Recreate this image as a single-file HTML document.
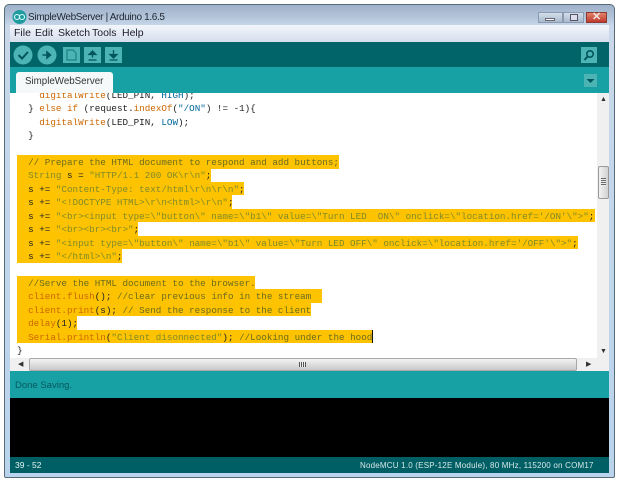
<!DOCTYPE html>
<html><head><meta charset="utf-8"><style>
html,body{margin:0;padding:0;width:620px;height:483px;overflow:hidden;background:#fff}
div{position:absolute;box-sizing:border-box}
#f{left:4px;top:4px;width:611px;height:474px;border:1px solid #5a6b78;border-radius:5px 5px 2px 2px;background:linear-gradient(#9fb2c9 0,#b3c4da 12px,#c9d8ea 21px,#b9d4ec 100%)}
.s{font:9.25px/13.43px "Liberation Mono",monospace;white-space:pre;left:7px;color:#222;height:13.43px;filter:blur(.25px)}
.h{background:#fdc300;left:17px;height:13.5px}
.o{color:#cc6600}.b{color:#006699}.k{color:#7f8a2a}
.c{color:#6b6b20}
.m{top:26px;font:10.5px/15px 'Liberation Sans',sans-serif;color:#1c1c2c;white-space:pre}
</style></head><body>
<div id="f"></div>
<svg style="position:absolute;left:12px;top:10px" width="15" height="14"><circle cx="7.500" cy="7" r="7" fill="#1f9ba0"/><circle cx="5" cy="7" r="2.500" fill="none" stroke="#dff" stroke-width="1.100"/><circle cx="10" cy="7" r="2.500" fill="none" stroke="#dff" stroke-width="1.100"/></svg>
<div style="left:28px;top:10px;font:10px/15px 'Liberation Sans',sans-serif;color:#1e2630;white-space:pre;letter-spacing:-.35px">SimpleWebServer | Arduino 1.6.5</div>
<div style="left:538px;top:12px;width:25px;height:11px;background:linear-gradient(#d5deea,#a9bacd);border:1px solid #8a9ab0"></div>
<div style="left:545px;top:18px;width:10px;height:3px;background:#fff;border:1px solid #667"></div>
<div style="left:563px;top:12px;width:21px;height:11px;background:linear-gradient(#d5deea,#a9bacd);border:1px solid #8a9ab0"></div>
<div style="left:570px;top:14px;width:8px;height:7px;border:1.500px solid #556;background:#dde"></div>
<div style="left:586px;top:12px;width:21px;height:11px;background:linear-gradient(#e2826c,#c0392b);border:1px solid #8a3a30"></div>
<div style="left:592px;top:11px;font:bold 11px/12px 'Liberation Sans',sans-serif;color:#f4e4e0">✕</div>
<div style="left:10px;top:25px;width:599px;height:17px;background:linear-gradient(#f3f6fb,#d6deec)"></div>
<div class="m" style="left:14px">File</div>
<div class="m" style="left:35px">Edit</div>
<div class="m" style="left:58px">Sketch</div>
<div class="m" style="left:92px">Tools</div>
<div class="m" style="left:122px">Help</div>
<div style="left:10px;top:42px;width:599px;height:25px;background:#006468"></div>
<div style="left:10px;top:67px;width:599px;height:26px;background:#17a1a5"></div>
<svg style="position:absolute;left:13px;top:45px" width="115" height="20">
<circle cx="10" cy="10" r="9.5" fill="#4db4b5"/><circle cx="34" cy="10" r="9.5" fill="#4db4b5"/>
<path d="M5.500 10l3.500 3.500 6-6.500" fill="none" stroke="#00565a" stroke-width="2"/>
<path d="M29.500 10h5M34 7l3.500 3-3.500 3z" fill="#00565a" stroke="#00565a" stroke-width="1.500"/>
<rect x="50" y="2" width="17" height="16" fill="#4db4b5"/><rect x="71" y="2" width="17" height="16" fill="#4db4b5"/><rect x="92" y="2" width="17" height="16" fill="#4db4b5"/>
<path d="M54 5h6l3 3v7h-9z" fill="none" stroke="#1d8084" stroke-width="1.200"/>
<path d="M79.500 6l-3.500 3.500h7zM79.500 9v3.500M75.500 15h8" fill="#00565a" stroke="#00565a" stroke-width="1.300"/>
<path d="M100.500 13l-3.500-3.500h7zM100.500 5v5M96.500 15h8" fill="#00565a" stroke="#00565a" stroke-width="1.300"/></svg>
<svg style="position:absolute;left:581px;top:47px" width="16" height="16"><rect width="16" height="16" fill="#4db4b5"/><circle cx="9" cy="7" r="3.200" fill="none" stroke="#00565a" stroke-width="1.600"/><path d="M6.500 9.500L3.500 13" stroke="#00565a" stroke-width="2"/></svg>
<svg style="position:absolute;left:584px;top:74px" width="13" height="13"><rect width="13" height="13" fill="#4db4b5"/><path d="M2.500 5h8l-4 4z" fill="#00565a"/></svg>
<div style="left:16px;top:72px;width:97px;height:21px;background:#f6f9f9;border-radius:3px 3px 0 0"></div>
<div style="left:25px;top:75px;font:9.75px/14px 'Liberation Sans',sans-serif;color:#333;white-space:pre">SimpleWebServer</div>

<div id="e" style="left:10px;top:93px;width:587px;height:265px;background:#fff"></div>
<div style="left:597px;top:93px;width:12px;height:265px;background:#f0f0f0"></div>
<div style="left:598px;top:166px;width:11px;height:33px;background:linear-gradient(90deg,#f2f2f2,#d2d2d2);border:1px solid #9a9a9a;border-radius:2px"></div>
<div style="left:601px;top:178px;width:5px;height:8px;background:repeating-linear-gradient(#666 0 1px,#eee 1px 2px)"></div>
<div style="left:600px;top:96px;font:7px/8px 'Liberation Sans',sans-serif;color:#333">▲</div>
<div style="left:600px;top:348px;font:7px/8px 'Liberation Sans',sans-serif;color:#333">▼</div>
<div style="left:10px;top:358px;width:599px;height:13px;background:#f0f0f0"></div>
<div style="left:29px;top:358px;width:548px;height:13px;background:linear-gradient(#f4f4f4,#c9c9c9);border:1px solid #a8a8a8;border-radius:2px"></div>
<div style="left:299px;top:362px;width:7px;height:5px;background:repeating-linear-gradient(90deg,#555 0 1px,#eee 1px 2px)"></div>
<div style="left:18px;top:360px;font:7px/9px 'Liberation Sans',sans-serif;color:#333">◀</div>
<div style="left:586px;top:360px;font:7px/9px 'Liberation Sans',sans-serif;color:#333">▶</div>

<div class="h" style="top:155px;width:322px"></div>
<div class="h" style="top:168.400px;width:194px"></div>
<div class="h" style="top:181.900px;width:227px"></div>
<div class="h" style="top:195.300px;width:215px"></div>
<div class="h" style="top:208.700px;width:578px"></div>
<div class="h" style="top:222.200px;width:121px"></div>
<div class="h" style="top:235.600px;width:561px"></div>
<div class="h" style="top:249px;width:105px"></div>
<div class="h" style="top:275.900px;width:238px"></div>
<div class="h" style="top:289.300px;width:305px"></div>
<div class="h" style="top:302.800px;width:294px"></div>
<div class="h" style="top:316.200px;width:60px"></div>
<div class="h" style="top:329.600px;width:356px"></div>
<div style="left:372px;top:330px;width:1px;height:13px;background:#111"></div>

<div style="left:10px;top:93px;width:587px;height:265px;overflow:hidden">
<div style="left:0;top:1px;width:587px;height:264px">
<div class="s" style="top:-5px">    <span class="o">digitalWrite</span>(LED_PIN, <span class="b">HIGH</span>);</div>
<div class="s" style="top:8.400px">  } <span class="o">else</span> <span class="o">if</span> (request.<span class="o">indexOf</span>(<span class="b">"/ON"</span>) != -1){</div>
<div class="s" style="top:21.900px">    <span class="o">digitalWrite</span>(LED_PIN, <span class="b">LOW</span>);</div>
<div class="s" style="top:35.300px">  }</div>
<div class="s" style="top:62px">  <span class="c">// Prepare the HTML document to respond and add buttons;</span></div>
<div class="s" style="top:75.400px">  <span class="k">String</span> s = <span class="k">"HTTP/1.1 200 OK\r\n"</span>;</div>
<div class="s" style="top:88.900px">  s += <span class="k">"Content-Type: text/html\r\n\r\n"</span>;</div>
<div class="s" style="top:102.300px">  s += <span class="k">"&lt;!DOCTYPE HTML&gt;\r\n&lt;html&gt;\r\n"</span>;</div>
<div class="s" style="top:115.700px">  s += <span class="k">"&lt;br&gt;&lt;input type=\"button\" name=\"b1\" value=\"Turn LED  ON\" onclick=\"location.href='/ON'\"&gt;"</span>;</div>
<div class="s" style="top:129.200px">  s += <span class="k">"&lt;br&gt;&lt;br&gt;&lt;br&gt;"</span>;</div>
<div class="s" style="top:142.600px">  s += <span class="k">"&lt;input type=\"button\" name=\"b1\" value=\"Turn LED OFF\" onclick=\"location.href='/OFF'\"&gt;"</span>;</div>
<div class="s" style="top:156px">  s += <span class="k">"&lt;/html&gt;\n"</span>;</div>
<div class="s" style="top:182.900px">  <span class="c">//Serve the HTML document to the browser.</span></div>
<div class="s" style="top:196.300px">  <span class="o">client.flush</span>(); <span class="c">//clear previous info in the stream</span></div>
<div class="s" style="top:209.800px">  <span class="o">client.print</span>(s); <span class="c">// Send the response to the client</span></div>
<div class="s" style="top:223.200px">  <span class="o">delay</span>(1);</div>
<div class="s" style="top:236.600px">  <span class="o">Serial.println</span>(<span class="k">"Client disonnected"</span>); <span class="c">//Looking under the hood</span></div>
<div class="s" style="top:250px">}</div>
</div>
</div>

<div style="left:10px;top:371px;width:599px;height:27px;background:#17a1a5"></div>
<div style="left:15px;top:379px;font:9.5px/14px 'Liberation Sans',sans-serif;color:#04595c;white-space:pre">Done Saving.</div>
<div style="left:10px;top:398px;width:599px;height:59px;background:#000"></div>
<div style="left:10px;top:457px;width:599px;height:16px;background:#005f64"></div>
<div style="left:15px;top:459px;font:8.5px/13px 'Liberation Sans',sans-serif;color:#e6f2f2;white-space:pre">39 - 52</div>
<div style="left:360px;top:459px;font:8px/13px 'Liberation Sans',sans-serif;color:#d8e8e8;white-space:pre;letter-spacing:.2px">NodeMCU 1.0 (ESP-12E Module), 80 MHz, 115200 on COM17</div>
</body></html>
